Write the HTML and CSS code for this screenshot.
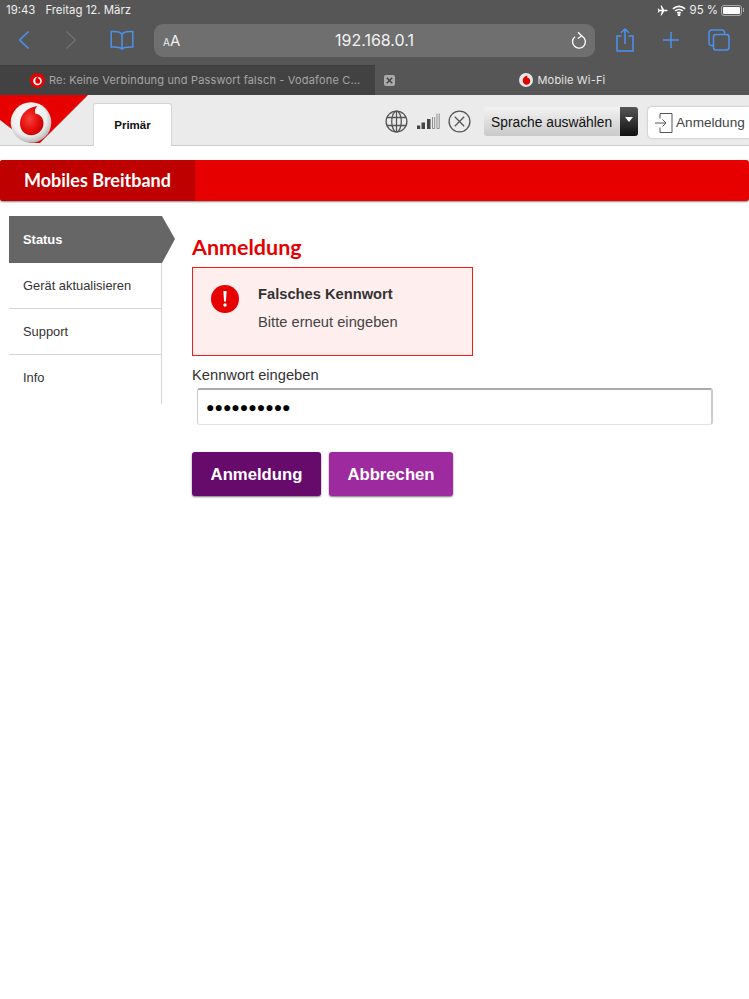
FILE: index.html
```html
<!DOCTYPE html>
<html lang="de">
<head>
<meta charset="utf-8">
<title>Mobile Wi-Fi</title>
<link rel="stylesheet" href="styles.css">
</head>
<body>
<div class="chrome">
  <div class="status">
    <span class="time">19:43</span><span class="date">Freitag 12. März</span>
    <span class="status-right">
      <svg class="plane" width="11" height="11" viewBox="0 0 12 12"><path d="M11.6 6c0-.5-.5-.9-1.200-.9H7.800L5 .6H3.900l1.300 4.500H2.700L1.700 3.800H.8l.6 2.200-.6 2.200h.9l1-1.300h2.500L3.900 11.400H5l2.800-4.500h2.600c.7 0 1.200-.4 1.200-.9z" fill="#fff"/></svg>
      <svg class="wifi" width="14" height="11" viewBox="0 0 14 11" fill="none" stroke="#fff" stroke-width="1.700"><path d="M1 3.800a8.600 8.600 0 0 1 12 0"/><path d="M3.200 6a5.500 5.500 0 0 1 7.600 0"/><path d="M5.300 8.100a2.500 2.500 0 0 1 3.400 0"/><circle cx="7" cy="9.700" r=".6"/></svg>
      <span class="pct">95 %</span>
      <span class="battery"><span class="battery-fill"></span></span><span class="battery-tip"></span>
    </span>
  </div>
  <div class="toolbar">
    <svg class="tb-back" width="12" height="20" viewBox="0 0 12 20" fill="none" stroke="#4b93ee" stroke-width="1.600"><path d="M10.500 1.500 1.700 10l8.800 8.500"/></svg>
    <svg class="tb-fwd" width="12" height="20" viewBox="0 0 12 20" fill="none" stroke="#6f6f6f" stroke-width="1.600"><path d="M1.500 1.500 10.300 10l-8.800 8.500"/></svg>
    <svg class="tb-book" width="24" height="20" viewBox="0 0 24 20" fill="none" stroke="#4b93ee" stroke-width="1.500"><path d="M12 4.200C10.500 2 7.500 1 1.200 1.500v15.600c6-.4 9 .2 10.800 2 1.800-1.800 4.800-2.400 10.800-2V1.500C16.500 1 13.500 2 12 4.200zm0 0v14.900"/></svg>
    <div class="urlbar">
      <span class="aa"><small>A</small>A</span>
      <span class="url">192.168.0.1</span>
      <svg class="reload" width="16" height="18" viewBox="0 0 16 18" fill="none" stroke="#fff" stroke-width="1.300"><path d="M4 5.700a6.400 6.400 0 1 0 7-.6"/><path d="M7 1.200 10.800 5 6.800 7.500"/></svg>
    </div>
    <svg class="tb-share" width="18" height="24" viewBox="0 0 18 24" fill="none" stroke="#4b93ee" stroke-width="1.500"><path d="M5.500 8H1v15h16V8h-4.500M9 16V1M5 4.700 9 1l4 3.700"/></svg>
    <svg class="tb-plus" width="18" height="18" viewBox="0 0 18 18" fill="none" stroke="#4b93ee" stroke-width="1.500"><path d="M9 1v16M1 9h16"/></svg>
    <svg class="tb-tabs" width="22" height="22" viewBox="0 0 22 22" fill="none" stroke="#4b93ee" stroke-width="1.500"><path d="M5.500 16.500H3.500a2.500 2.500 0 0 1-2.500-2.500V3.500A2.500 2.500 0 0 1 3.500 1H14a2.500 2.500 0 0 1 2.500 2.500v2"/><rect x="5.500" y="5.500" width="15.500" height="15.500" rx="2.500"/></svg>
  </div>
  <div class="tabs">
    <div class="tab tab-off">
      <svg class="favicon" width="15" height="15" viewBox="0 0 16 16"><circle cx="8" cy="8" r="8" fill="#e60000"/><circle cx="8" cy="8.500" r="4.600" fill="#fff"/><path d="M9.600 3.300C7.800 4 5.600 5.500 5.600 8.500c0 1.700 1.100 2.900 2.700 2.900 1.500 0 2.600-1.200 2.600-2.700 0-1.400-.9-2.300-1.900-2.500-.4-.8-.2-1.900.6-2.900z" fill="#e60000"/></svg>
      <span class="tab-title">Re: Keine Verbindung und Passwort falsch - Vodafone C...</span>
    </div>
    <div class="tab tab-on">
      <span class="tab-close"><svg width="7" height="7" viewBox="0 0 7 7" stroke="#444" stroke-width="1.500"><path d="M.8.800l5.400 5.400M6.200.800.8 6.200"/></svg></span>
      <span class="tab-center">
        <svg class="favicon" width="14" height="14" viewBox="0 0 16 16"><circle cx="8" cy="8" r="8" fill="#e8e8e8"/><path d="M9.800 2.800C7.500 3.500 4.300 5 4.300 8.800c0 2.600 1.800 4.500 4.300 4.500 2.400 0 4.200-1.900 4.200-4.300 0-2.100-1.300-3.300-3-3.600-.6-.7-.5-1.700 0-2.600z" fill="#e60000"/></svg>
        <span class="tab-title-on">Mobile Wi-Fi</span>
      </span>
    </div>
  </div>
</div>

<header class="topbar">
  <svg class="logo" width="88" height="48" viewBox="0 0 88 48"><defs><radialGradient id="ball" cx="45%" cy="40%" r="65%"><stop offset="0" stop-color="#fff"/><stop offset=".65" stop-color="#eee"/><stop offset="1" stop-color="#a5a5a5"/></radialGradient><radialGradient id="drop" cx="40%" cy="45%" r="65%"><stop offset="0" stop-color="#f5413c"/><stop offset=".6" stop-color="#e60c0c"/><stop offset="1" stop-color="#c40000"/></radialGradient></defs><path d="M0 0H88L40 48H30L0 25z" fill="#e60000"/><circle cx="31" cy="27.500" r="20.300" fill="url(#ball)"/><path d="M37.500 11C28.500 12 20 18.500 20 28.500c0 6.800 5 11.700 11 11.700 7 0 12.500-5.300 12.500-12 0-5.500-3.700-9-8.200-9.700-.9-2.500-.2-5.500 2.200-7.500z" fill="url(#drop)"/></svg>
  <div class="tab-primary">Primär</div>
  <div class="topbar-right">
    <svg class="ic-globe" width="23" height="23" viewBox="0 0 23 23" fill="none" stroke="#555" stroke-width="1.300"><circle cx="11.500" cy="11.500" r="10.400"/><ellipse cx="11.500" cy="11.500" rx="4.800" ry="10.400"/><path d="M11.500 1v21M1.800 7.500h19.400M1.800 15.500h19.400"/></svg>
    <svg class="ic-signal" width="23" height="16" viewBox="0 0 23 16"><rect x="0" y="12.500" width="3.200" height="3.500" fill="#444"/><rect x="4.500" y="9.500" width="3.500" height="6.500" fill="#444"/><rect x="10" y="6" width="3.500" height="10" fill="#444"/><path d="M15.500 4V15.500h2.200V4M20 .5v15h2.200V.5" fill="none" stroke="#777" stroke-width=".8"/></svg>
    <svg class="ic-x" width="23" height="23" viewBox="0 0 23 23" fill="none" stroke="#555" stroke-width="1.300"><circle cx="11.500" cy="11.500" r="10.400"/><path d="M6.800 6.800l9.400 9.400M16.200 6.800l-9.400 9.400"/></svg>
    <div class="lang">
      <span class="lang-text">Sprache auswählen</span>
      <span class="lang-arrow"></span>
    </div>
    <div class="login-top">
      <svg width="18" height="22" viewBox="0 0 18 22" fill="none" stroke="#555" stroke-width="1"><path d="M5 6.500V1.500h12v19H5v-5"/><path d="M0 11h11M7.500 7.500 11 11l-3.500 3.500"/></svg>
      <span>Anmeldung</span>
    </div>
  </div>
</header>

<div class="banner"><div class="banner-title">Mobiles Breitband</div></div>

<div class="content">
  <nav class="side">
    <a class="side-item side-active">Status</a>
    <a class="side-item">Gerät aktualisieren</a>
    <a class="side-item">Support</a>
    <a class="side-item side-last">Info</a>
  </nav>
  <main class="main">
    <h1 class="title">Anmeldung</h1>
    <div class="alert">
      <span class="alert-icon">
        <svg width="28" height="28" viewBox="0 0 28 28"><circle cx="14" cy="14" r="14" fill="#e60000"/><path d="M12.400 6h3.200l-.6 10.500h-2z" fill="#fff"/><circle cx="14" cy="20" r="1.700" fill="#fff"/></svg>
      </span>
      <div class="alert-body">
        <div class="alert-head">Falsches Kennwort</div>
        <div class="alert-text">Bitte erneut eingeben</div>
      </div>
    </div>
    <label class="field-label">Kennwort eingeben</label>
    <div class="input">●●●●●●●●●●</div>
    <div class="actions">
      <button class="btn btn-primary">Anmeldung</button>
      <button class="btn btn-secondary">Abbrechen</button>
    </div>
  </main>
</div>
</body>
</html>
```
FILE: styles.css
```css
* { box-sizing: border-box; }
html, body { margin: 0; padding: 0; }
body { width: 749px; height: 999px; overflow: hidden; background: #fff; font-family: "Liberation Sans", Arial, sans-serif; color: #333; }

.chrome { background: #565656; font-family: Inter, "Liberation Sans", sans-serif; }
.status { height: 20px; display: flex; align-items: center; padding: 0 5px 0 6px; color: #f0f0f0; font-size: 11.400px; }
.time { margin-right: 10px; }
.status-right { margin-left: auto; display: flex; align-items: center; }
.plane { margin-right: 4px; }
.wifi { margin-right: 4px; }
.pct { margin-right: 3px; }
.battery { width: 21px; height: 11px; border: 1px solid #aaa; border-radius: 3px; padding: 1px; display: flex; }
.battery-fill { flex: 1; background: #fff; border-radius: 1px; }
.battery-tip { width: 1px; height: 4px; background: #aaa; margin-left: 1px; }

.toolbar { height: 45px; display: flex; align-items: center; padding-bottom: 5px; position: relative; }
.tb-back { margin-left: 18px; }
.tb-fwd { margin-left: 35px; }
.tb-book { margin-left: 33px; }
.urlbar { margin-left: 20px; width: 441px; height: 33px; border-radius: 9px; background: #6f6f6f; display: flex; align-items: center; padding: 0 8px 0 9px; position: relative; color: #fff; }
.aa { font-size: 15px; color: #eee; }
.aa small { font-size: 10px; }
.url { position: absolute; left: 0; right: 0; text-align: center; font-size: 16px; color: #f2f2f2; }
.reload { margin-left: auto; }
.tb-share { margin-left: 21px; }
.tb-plus { margin-left: 28px; }
.tb-tabs { margin-left: 28px; }

.tabs { height: 30px; display: flex; }
.tab { width: 375px; display: flex; align-items: center; font-size: 11px; letter-spacing: .17px; }
.tab-off { background: #424242; padding-left: 30px; color: #a6a6a6; box-shadow: inset 0 1px 0 #3c3c3c; }
.tab-off .favicon { margin-right: 4px; }
.tab-on { background: #565656; padding-left: 9px; color: #e4e4e4; position: relative; }
.tab-close { width: 11px; height: 11px; background: #aaa; border-radius: 2px; display: flex; align-items: center; justify-content: center; }
.tab-center { display: flex; align-items: center; margin-left: 124px; }
.tab-center .favicon { margin-right: 5px; }

.topbar { height: 51px; background: #ebebeb; border-bottom: 1px solid #cdcdcd; display: flex; position: relative; }
.logo { position: absolute; left: 0; top: 0; }
.tab-primary { margin-left: 93px; margin-top: 8px; width: 79px; height: 43px; background: #fff; border: 1px solid #d5d5d5; border-bottom: 0; border-radius: 3px 3px 0 0; display: flex; align-items: center; justify-content: center; font-size: 11.500px; font-weight: bold; color: #111; }
.topbar-right { margin-left: auto; display: flex; align-items: flex-start; }
.ic-globe { margin-top: 15px; }
.ic-signal { margin-top: 18px; margin-left: 9px; }
.ic-x { margin-top: 15px; margin-left: 8px; }
.lang { margin-left: 13px; margin-top: 12px; width: 154px; height: 29px; border-radius: 3px; background: linear-gradient(#f3f3f3, #c9c9c9); display: flex; align-items: center; font-size: 13.800px; color: #111; padding: 1px 0 0 7px; position: relative; overflow: hidden; }
.lang-arrow { position: absolute; right: 0; top: 0; bottom: 0; width: 18px; background: linear-gradient(#555, #111); }
.lang-arrow::after { content: ""; position: absolute; left: 5px; top: 10px; border: 4px solid transparent; border-top: 5px solid #fff; border-bottom: 0; }
.login-top { margin-left: 10px; margin-top: 12px; width: 101px; height: 31px; background: #fff; border-radius: 4px 0 0 4px; box-shadow: 0 0 2px #999; display: flex; align-items: center; padding-left: 7px; gap: 3px; font-size: 13.600px; color: #444; }

.banner { margin-top: 14px; height: 41px; background: #e60000; border-radius: 3px; box-shadow: 0 1px 2px #888; }
.banner-title { width: 195px; height: 41px; background: #bf0000; border-radius: 3px 0 0 3px; padding-left: 24px; font-family: Lato, "Open Sans", sans-serif; font-weight: 700; font-size: 18px; line-height: 41px; color: #fff; }

.content { display: flex; margin-top: 15px; }
.side { margin-left: 9px; width: 153px; display: flex; flex-direction: column; border-right: 1px solid #d5d5d5; height: 188px; }
.side-item { height: 46px; padding-left: 14px; display: flex; align-items: center; font-size: 12.900px; color: #333; border-bottom: 1px solid #d5d5d5; }
.side-last { border-bottom-color: transparent; }
.side-active { height: 47px; width: 166px; background: #666; color: #fff; font-weight: bold; clip-path: polygon(0 0, 153px 0, 166px 23px, 153px 100%, 0 100%); border-bottom: 0; }

.main { margin-left: 30px; flex: 1; padding-right: 36px; }
.title { margin: 18px 0 0; font-family: Lato, "Open Sans", sans-serif; font-size: 21.500px; line-height: 26px; font-weight: 700; color: #e60000; }
.alert { margin-top: 7px; width: 281px; height: 89px; background: #ffeeee; border: 1px solid #f21c1c; display: flex; padding: 17px 0 0 18px; }
.alert-icon { width: 28px; height: 28px; }
.alert-body { margin-left: 19px; }
.alert-head { font-size: 14.700px; font-weight: bold; line-height: 18px; color: #333; }
.alert-text { font-size: 14.700px; line-height: 18px; margin-top: 10px; color: #444; }
.field-label { display: block; margin-top: 10px; font-size: 14.700px; line-height: 18px; color: #333; }
.input { margin: 4px 0 0 5px; width: 516px; height: 37px; border: 1px solid #e2e2e2; border-top: 2px solid #aaa; border-left-color: #ccc; border-right: 2px solid #ccc; border-radius: 3px; padding-left: 8px; display: flex; align-items: center; font-size: 14px; color: #000; overflow: hidden; }
.actions { margin-top: 27px; display: flex; gap: 8px; }
.btn { height: 44px; border: 0; border-radius: 3px; font-family: "Liberation Sans", Arial, sans-serif; font-weight: bold; font-size: 16.700px; color: #fff; box-shadow: 0 1px 2px #777; padding: 2px 0 0; }
.btn-primary { width: 129px; background: #660b6c; }
.btn-secondary { width: 124px; background: #9e2aa0; }
```
